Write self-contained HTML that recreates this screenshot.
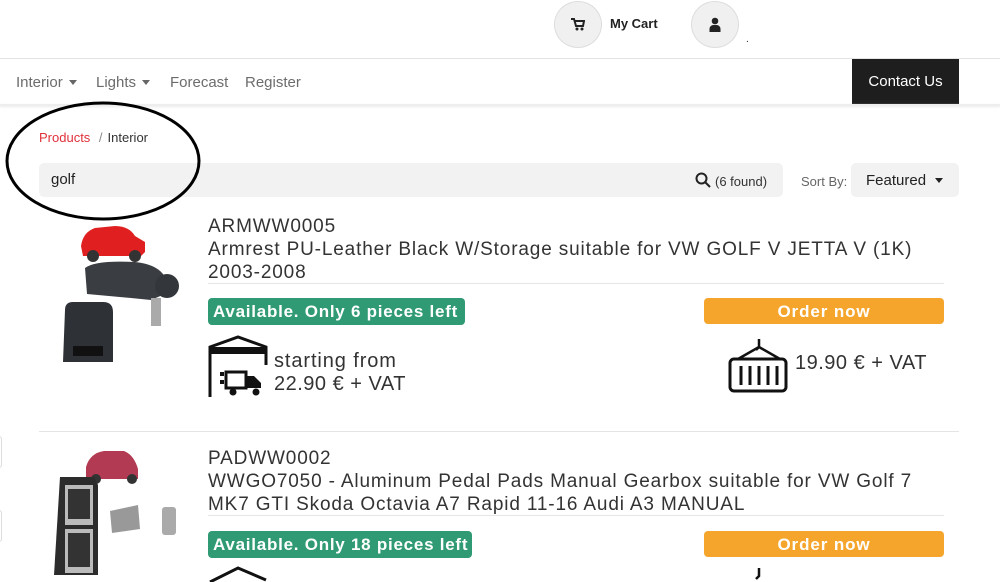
<!DOCTYPE html>
<html><head><meta charset="utf-8"><style>
*{margin:0;padding:0;box-sizing:border-box}
body{width:1000px;height:582px;overflow:hidden;background:#fff;font-family:"Liberation Sans",sans-serif;position:relative;color:#222}
.a{position:absolute;white-space:nowrap}
.nav{color:#6c6c6c;font-size:15px;top:74px}
.tri{display:inline-block;border-left:4px solid transparent;border-right:4px solid transparent;border-top:5px solid #666;vertical-align:middle;margin-left:6px;margin-top:-2px}
.t{font-size:19px;color:#333;letter-spacing:.85px;line-height:23px}
.badge{background:#2f9a74;color:#fff;font-weight:bold;font-size:17px;border-radius:4px;height:27px;line-height:27px;padding-left:5px;letter-spacing:.75px}
.order{background:#f5a52c;color:#fff;font-weight:bold;font-size:17px;border-radius:4px;height:26px;line-height:27px;text-align:center;width:240px;letter-spacing:.9px}
.pr{font-size:20px;color:#333;letter-spacing:.5px}
</style></head><body>
<div class="a" style="left:554px;top:1px;width:48px;height:47px;border-radius:50%;background:#f0f0f0;border:1px solid #ddd"></div>
<svg class="a" style="left:571px;top:18px" width="14" height="13" viewBox="0 0 14 13"><path d="M0 1h3l2 7h7l1-5H4" fill="none" stroke="#222" stroke-width="2"/><circle cx="6" cy="11" r="1.5" fill="#222"/><circle cx="11" cy="11" r="1.5" fill="#222"/></svg>
<div class="a" style="left:610px;top:16px;font-size:13px;font-weight:bold">My Cart</div>
<div class="a" style="left:691px;top:1px;width:48px;height:47px;border-radius:50%;background:#f0f0f0;border:1px solid #ddd"></div>
<svg class="a" style="left:709px;top:17px" width="12" height="15" viewBox="0 0 12 15"><circle cx="6" cy="4" r="3.3" fill="#222"/><path d="M0.5 15v-3a4 4 0 0 1 4-4h3a4 4 0 0 1 4 4v3z" fill="#222"/></svg>
<div class="a" style="left:746px;top:34px;font-size:10px">.</div>
<div class="a" style="left:0;top:58px;width:1000px;height:1px;background:#e4e4e4"></div>
<div class="a nav" style="left:16px">Interior<span class="tri"></span></div>
<div class="a nav" style="left:96px">Lights<span class="tri"></span></div>
<div class="a nav" style="left:170px">Forecast</div>
<div class="a nav" style="left:245px">Register</div>
<div class="a" style="left:852px;top:59px;width:107px;height:46px;background:#1e1e1e;color:#fff;font-size:15px;line-height:46px;text-align:center">Contact Us</div>
<div class="a" style="left:0;top:104px;width:1000px;height:2px;background:#eee;box-shadow:0 1px 2px #e8e8e8"></div>
<div class="a" style="left:39px;top:130px;font-size:13px;color:#e0303a">Products <span style="color:#888;margin:0 5px">/</span><span style="color:#333">Interior</span></div>
<div class="a" style="left:39px;top:163px;width:744px;height:34px;background:#f2f2f2;border-radius:5px"></div>
<div class="a" style="left:51px;top:171px;font-size:15px;color:#222">golf</div>
<svg class="a" style="left:695px;top:172px" width="16" height="16" viewBox="0 0 16 16"><circle cx="6.5" cy="6.5" r="5" fill="none" stroke="#222" stroke-width="2"/><path d="M10 10l5 5" stroke="#222" stroke-width="2"/></svg>
<div class="a" style="left:715px;top:174px;font-size:13px;color:#333">(6 found)</div>
<div class="a" style="left:801px;top:174px;font-size:13px;color:#666">Sort By:</div>
<div class="a" style="left:851px;top:163px;width:108px;height:34px;background:#f2f2f2;border-radius:5px;font-size:15px;line-height:35px;padding-left:15px;color:#222">Featured<span class="tri" style="border-top-color:#222;margin-left:9px"></span></div>
<svg class="a" style="left:0;top:95px" width="210" height="130"><ellipse cx="103" cy="66" rx="96" ry="58" fill="none" stroke="#000" stroke-width="3"/></svg>
<svg class="a" style="left:55px;top:218px" width="140" height="150">
<path d="M26 28q2-14 14-18l20-2q14 0 20 10l10 6v10l-4 4H28z" fill="#e02020"/>
<circle cx="38" cy="38" r="6" fill="#333"/><circle cx="80" cy="38" r="6" fill="#333"/>
<path d="M30 50q10-8 50-6 20 2 28 12l6 10-4 10-14 6-20-2-44-4z" fill="#3a3d42"/>
<circle cx="112" cy="68" r="12" fill="#33363a"/>
<rect x="96" y="80" width="10" height="28" fill="#aaa"/>
<path d="M10 92q0-8 8-8h30q10 0 10 10v50H8z" fill="#2e3136"/>
<rect x="18" y="128" width="30" height="10" fill="#111"/>
</svg>
<div class="a t" style="left:208px;top:215px">ARMWW0005</div>
<div class="a t" style="left:208px;top:238px">Armrest PU-Leather Black W/Storage suitable for VW GOLF V JETTA V (1K)</div>
<div class="a t" style="left:208px;top:261px">2003-2008</div>
<div class="a" style="left:208px;top:283px;width:736px;height:1px;background:#e6e6e6"></div>
<div class="a badge" style="left:208px;top:298px;width:257px">Available. Only 6 pieces left</div>
<div class="a order" style="left:704px;top:298px">Order now</div>
<svg class="a" style="left:208px;top:335px" width="62" height="62" viewBox="0 0 62 62">
<path d="M2 62V12L30 2l28 10v18" fill="none" stroke="#111" stroke-width="3"/>
<rect x="2" y="12" width="56" height="7" fill="#111"/>
<rect x="18" y="37" width="20" height="16" fill="none" stroke="#111" stroke-width="3"/>
<path d="M38 41h8l7 7v5H38z" fill="#111"/>
<rect x="12" y="37" width="4" height="4" fill="#111"/><rect x="12" y="45" width="4" height="4" fill="#111"/>
<circle cx="25" cy="57" r="3.5" fill="#111"/><circle cx="48" cy="57" r="3.5" fill="#111"/>
</svg>
<div class="a pr" style="left:274px;top:350px;letter-spacing:.9px">starting from</div>
<div class="a pr" style="left:274px;top:373px">22.90 € + VAT</div>
<svg class="a" style="left:728px;top:337px" width="62" height="56" viewBox="0 0 62 56">
<path d="M31 2v8l-3 3M31 10L10 22M31 10l21 12" fill="none" stroke="#111" stroke-width="2.5"/>
<rect x="2" y="22" width="56" height="32" rx="4" fill="none" stroke="#111" stroke-width="3"/>
<path d="M13 29v19M22 29v19M31 29v19M40 29v19M49 29v19" stroke="#111" stroke-width="3"/>
</svg>
<div class="a pr" style="left:795px;top:352px">19.90 € + VAT</div>
<div class="a" style="left:39px;top:431px;width:920px;height:1px;background:#e4e4e4"></div>
<div class="a" style="left:-4px;top:436px;width:6px;height:32px;border:1px solid #ddd;border-radius:3px"></div>
<div class="a" style="left:-4px;top:510px;width:6px;height:32px;border:1px solid #ddd;border-radius:3px"></div>
<svg class="a" style="left:50px;top:445px" width="140" height="137">
<path d="M36 22q4-14 18-16h20q10 4 14 18v10H36z" fill="#b23a52"/>
<circle cx="46" cy="34" r="5" fill="#333"/><circle cx="82" cy="34" r="5" fill="#333"/>
<path d="M10 32h34l4 8v90H4z" fill="#2c2c2c"/>
<rect x="15" y="40" width="28" height="40" fill="#bbb"/><rect x="15" y="84" width="28" height="44" fill="#bbb"/>
<rect x="18" y="44" width="22" height="30" fill="#333"/><rect x="18" y="88" width="22" height="34" fill="#333"/>
<path d="M60 66l28-6 2 24-28 4z" fill="#999"/>
<rect x="112" y="62" width="14" height="28" rx="3" fill="#aaa"/>
</svg>
<div class="a t" style="left:208px;top:447px">PADWW0002</div>
<div class="a t" style="left:208px;top:470px">WWGO7050 - Aluminum Pedal Pads Manual Gearbox suitable for VW Golf 7</div>
<div class="a t" style="left:208px;top:493px">MK7 GTI Skoda Octavia A7 Rapid 11-16 Audi A3 MANUAL</div>
<div class="a" style="left:208px;top:515px;width:736px;height:1px;background:#e6e6e6"></div>
<div class="a badge" style="left:208px;top:531px;width:264px">Available. Only 18 pieces left</div>
<div class="a order" style="left:704px;top:531px">Order now</div>
<svg class="a" style="left:208px;top:566px" width="62" height="16"><path d="M2 16L30 2l28 12" fill="none" stroke="#111" stroke-width="3"/></svg>
<svg class="a" style="left:752px;top:566px" width="14" height="16"><path d="M7 2v8l-3 3" fill="none" stroke="#111" stroke-width="2.5"/></svg>
</body></html>
